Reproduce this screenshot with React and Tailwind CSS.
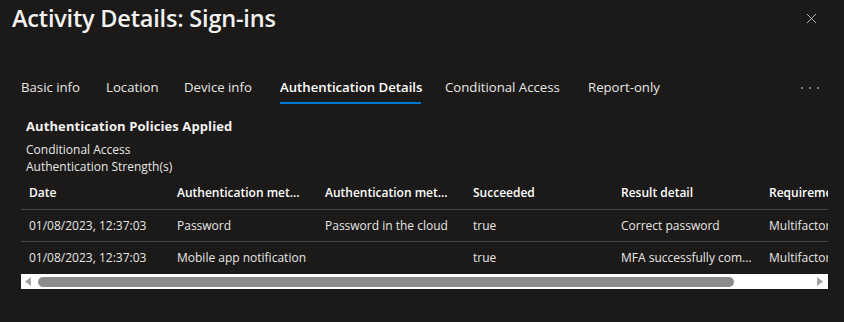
import { X } from 'lucide-react';

const tabs = [
    { label: 'Basic info', cls: 'w-[59px]' },
    { label: 'Location', cls: 'w-[52px] ml-[26px]' },
    { label: 'Device info', cls: 'w-[69px] ml-[26px]' },
    { label: 'Authentication Details', cls: 'w-[141px] ml-[27px]', active: true },
    { label: 'Conditional Access', cls: 'w-[116px] ml-[24px]' },
    { label: 'Report-only', cls: 'w-[73px] ml-[27px]' },
];

const columns = ['Date', 'Authentication met...', 'Authentication met...', 'Succeeded', 'Result detail', 'Requirement'];

const rows = [
    ['01/08/2023, 12:37:03', 'Password', 'Password in the cloud', 'true', 'Correct password', 'Multifactor authentication'],
    ['01/08/2023, 12:37:03', 'Mobile app notification', '', 'true', 'MFA successfully com...', 'Multifactor authentication'],
];

const App = () => {
    return (
        <div className="w-[844px] h-[322px] bg-[#1b1a19] text-[#f3f2f1] font-['Open_Sans',sans-serif] overflow-hidden">
            {/* Header */}
            <div className="flex items-start justify-between pl-[12px] pr-[24px] pt-[2px]">
                <h1 className="text-[23.5px] font-semibold leading-[32px] tracking-[-0.2px]">Activity Details: Sign-ins</h1>
                <button className="mt-[8px] text-[#d0d0d0]">
                    <X size={17} strokeWidth={1.2} />
                </button>
            </div>

            {/* Tabs */}
            <div className="flex items-center justify-between mt-[44px] pl-[21px] pr-[25px]">
                <div className="flex text-[13.2px]">
                    {tabs.map((tab) => (
                        <div
                            key={tab.label}
                            className={`${tab.cls} pb-[6px] border-b-2 leading-[18px] whitespace-nowrap ${tab.active ? 'border-[#0078d4] font-semibold text-white' : 'border-transparent text-[#e8e6e4]'}`}
                        >
                            {tab.label}
                        </div>
                    ))}
                </div>
                <div className="flex gap-[6px] pb-[7px]">
                    <span className="w-[2px] h-[2px] bg-[#a19f9d] rounded-full"></span>
                    <span className="w-[2px] h-[2px] bg-[#a19f9d] rounded-full"></span>
                    <span className="w-[2px] h-[2px] bg-[#a19f9d] rounded-full"></span>
                </div>
            </div>

            {/* Policies */}
            <div className="pl-[26px] mt-[13px]">
                <div className="text-[13px] font-bold leading-[18px] tracking-[0.1px]">Authentication Policies Applied</div>
                <div className="mt-[6px] text-[12px] leading-[17px] text-[#e8e6e4]">
                    <div>Conditional Access</div>
                    <div>Authentication Strength(s)</div>
                </div>
            </div>

            {/* Table */}
            <div className="ml-[21px] mt-[1px] w-[807px] overflow-hidden">
                <div className="w-[888px] text-[12px]">
                    <div className="flex h-[34px] items-center border-b border-[#484644] font-semibold text-white">
                        {columns.map((col, i) => (
                            <div key={i} className="w-[148px] pl-[8px] whitespace-nowrap overflow-hidden">{col}</div>
                        ))}
                    </div>
                    {rows.map((row, r) => (
                        <div key={r} className={`flex h-[32px] items-center text-[#e8e6e4] ${r === 0 ? 'border-b border-[#484644]' : ''}`}>
                            {row.map((cell, i) => (
                                <div key={i} className="w-[148px] pl-[8px] whitespace-nowrap overflow-hidden">{cell}</div>
                            ))}
                        </div>
                    ))}
                </div>
                {/* Scrollbar */}
                <div className="flex items-center h-[15px] bg-white px-[4px] gap-[4px]">
                    <svg width="7" height="9" viewBox="0 0 7 9">
                        <path d="M6 0 L6 9 L0 4.5 Z" fill="#a3a3a3" />
                    </svg>
                    <div className="ml-[2px] w-[696px] h-[10px] rounded-full bg-[#8c8c8c]"></div>
                    <div className="flex-1"></div>
                    <svg width="7" height="9" viewBox="0 0 7 9" className="mr-[1px]">
                        <path d="M1 0 L1 9 L7 4.5 Z" fill="#a3a3a3" />
                    </svg>
                </div>
            </div>
        </div>
    );
};

export default App;
